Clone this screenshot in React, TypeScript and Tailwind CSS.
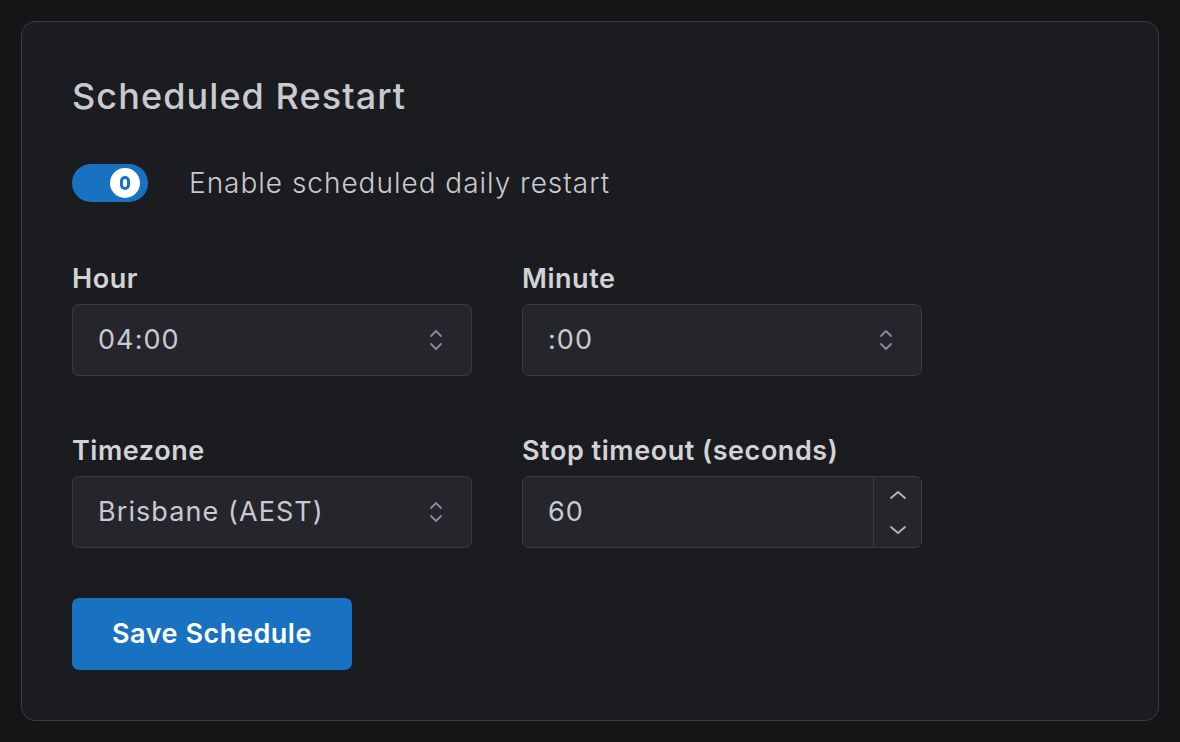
import { useState } from 'react';

function Chevrons() {
  return (
    <svg width="16" height="26" viewBox="0 0 16 26" fill="none" stroke="#8a8c93" strokeWidth={1.8} strokeLinecap="round" strokeLinejoin="round">
      <path d="M3 9 L8 4 L13 9" />
      <path d="M3 17 L8 22 L13 17" />
    </svg>
  );
}

function SelectBox({ value }: { value: string }) {
  return (
    <div className="flex h-[72px] w-[400px] items-center justify-between rounded-[7px] border border-[#3a3c42] bg-[#25262b] pl-[25px] pr-[27px]">
      <span className="text-[27px] font-normal tracking-[0.04em] text-[#c9cacf]">{value}</span>
      <Chevrons />
    </div>
  );
}

function NumberBox({ value }: { value: string }) {
  return (
    <div className="flex h-[72px] w-[400px] items-stretch rounded-[7px] border border-[#3a3c42] bg-[#25262b]">
      <div className="flex flex-1 items-center pl-[25px] text-[27px] tracking-[0.04em] text-[#c9cacf]">{value}</div>
      <div className="flex w-[48px] flex-col border-l border-[#3a3c42]">
        <div className="flex flex-1 items-center justify-center">
          <svg width="20" height="12" viewBox="0 0 20 12" fill="none" stroke="#b5b7bd" strokeWidth={1.8} strokeLinecap="round" strokeLinejoin="round">
            <path d="M3 9 L10 3 L17 9" />
          </svg>
        </div>
        <div className="flex flex-1 items-center justify-center">
          <svg width="20" height="12" viewBox="0 0 20 12" fill="none" stroke="#b5b7bd" strokeWidth={1.8} strokeLinecap="round" strokeLinejoin="round">
            <path d="M3 3 L10 9 L17 3" />
          </svg>
        </div>
      </div>
    </div>
  );
}

function Field({ label, children }: { label: string; children: React.ReactNode }) {
  return (
    <div className="flex flex-col gap-[9px]">
      <label className="text-[27px] font-semibold leading-[32px] tracking-[0.02em] text-[#d2d3d6]">{label}</label>
      {children}
    </div>
  );
}

export default function App() {
  const [enabled, setEnabled] = useState(true);

  return (
    <div className="min-h-[742px] bg-[#141517] p-[21px]" style={{ fontFamily: 'Inter, "Open Sans", sans-serif' }}>
      <div className="h-[700px] rounded-[14px] border border-[#3a3b41] bg-[#1b1c20] px-[50px] pt-[52px]">
        <h2 className="text-[36px] font-medium leading-[44px] tracking-[0.03em] text-[#c9cacf]">Scheduled Restart</h2>

        <div className="mt-[44px] flex items-center gap-[41px]">
          <button
            onClick={() => setEnabled(!enabled)}
            className="relative h-[38px] w-[76px] rounded-full bg-[#1971c2]"
          >
            <span className="absolute right-[8px] top-[4px] flex h-[30px] w-[30px] items-center justify-center rounded-full bg-white">
              <span className="h-[14px] w-[10px] rounded-full border-[3px] border-[#1971c2]" />
            </span>
          </button>
          <span className="text-[28px] font-light tracking-[0.035em] text-[#c9cacf]">Enable scheduled daily restart</span>
        </div>

        <div className="mt-[59px] grid w-[850px] grid-cols-2 gap-x-[50px] gap-y-[59px]">
          <Field label="Hour">
            <SelectBox value="04:00" />
          </Field>
          <Field label="Minute">
            <SelectBox value=":00" />
          </Field>
          <Field label="Timezone">
            <SelectBox value="Brisbane (AEST)" />
          </Field>
          <Field label="Stop timeout (seconds)">
            <NumberBox value="60" />
          </Field>
        </div>

        <button className="mt-[50px] h-[72px] w-[280px] rounded-[7px] bg-[#1971c2] text-[27px] font-semibold tracking-[0.02em] text-white">
          Save Schedule
        </button>
      </div>
    </div>
  );
}
